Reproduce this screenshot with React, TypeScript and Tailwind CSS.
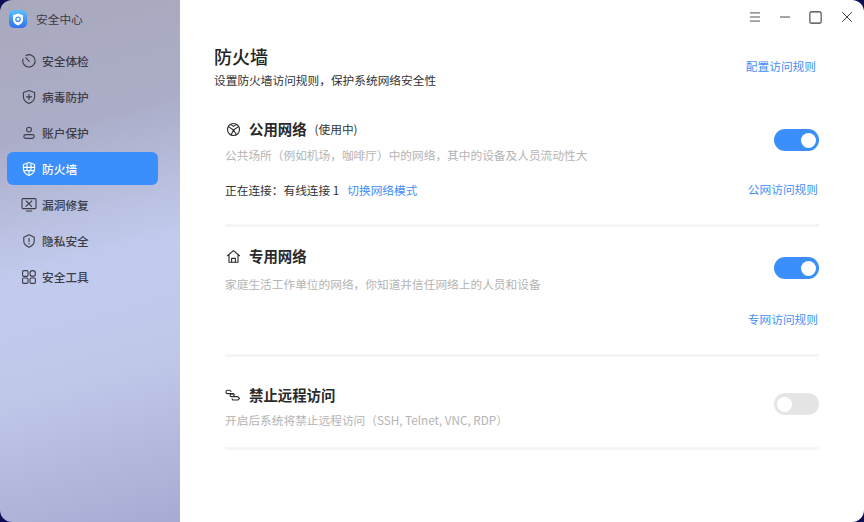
import { FC, ReactNode } from "react";
import { Menu, Minus, Square, X } from "lucide-react";

const CJK = "font-['Noto_Sans_CJK_SC','Noto_Sans',sans-serif]";

/* sidebar icons */
const Ico: FC<{ children: ReactNode; size?: number; className?: string }> = ({ children, size = 16, className }) => (
  <svg width={size} height={size} viewBox="0 0 16 16" fill="none" stroke="currentColor" strokeWidth="1.1" strokeLinecap="round" strokeLinejoin="round" className={className}>
    {children}
  </svg>
);

const ShieldPath = "M8 1.6 13.6 3.4V8c0 3-2.4 5.2-5.6 6.4C4.8 13.2 2.4 11 2.4 8V3.4Z";

const navItems: { label: string; icon: ReactNode; active?: boolean }[] = [
  {
    label: "安全体检",
    icon: (
      <Ico>
        <path d="M5 2.4A6.2 6.2 0 1 1 2 6" />
        <path d="M4.8 4.6 8.2 8.4" />
      </Ico>
    ),
  },
  {
    label: "病毒防护",
    icon: (
      <Ico>
        <path d={ShieldPath} />
        <path d="M8 5.4v5M5.5 7.9h5" />
      </Ico>
    ),
  },
  {
    label: "账户保护",
    icon: (
      <Ico>
        <circle cx="8" cy="4.6" r="2.4" />
        <rect x="2.8" y="9.6" width="10.4" height="3.8" rx="1.9" />
      </Ico>
    ),
  },
  {
    label: "防火墙",
    active: true,
    icon: (
      <Ico>
        <path d={ShieldPath} />
        <path d="M2.6 6.4h10.8M3 9.6h10M6 6.4v3.2M10 6.4v3.2M8 9.6v4.4M6 3v3.4M10 3v3.4" />
      </Ico>
    ),
  },
  {
    label: "漏洞修复",
    icon: (
      <Ico>
        <rect x="1" y="1.6" width="14" height="10" rx="1" />
        <path d="M5.2 4 10.6 9.4M10.8 4 8.6 6.2M5 9.4l2.2-2.2M5.4 14h5.2" />
      </Ico>
    ),
  },
  {
    label: "隐私安全",
    icon: (
      <Ico>
        <path d="M8 1.8 13.2 4.2V8.6C13.2 11 11 13 8 14.2 5 13 2.8 11 2.8 8.6V4.2Z" />
        <path d="M8 5.4v3.4M8 10.6v.3" />
      </Ico>
    ),
  },
  {
    label: "安全工具",
    icon: (
      <Ico>
        <rect x="1.6" y="1.6" width="5.4" height="5.8" rx="1.2" />
        <rect x="9" y="1.6" width="5.4" height="5.8" rx="2.7" />
        <rect x="1.6" y="9" width="5.4" height="5.4" rx="1.2" />
        <rect x="9" y="9" width="5.4" height="5.4" rx="1.2" />
      </Ico>
    ),
  },
];

const Toggle: FC<{ on?: boolean }> = ({ on }) => (
  <div className={`flex h-[22px] w-[45px] items-center rounded-full px-[3px] ${on ? "justify-end bg-[#3a8ffc]" : "justify-start bg-[#e5e5e5]"}`}>
    <div className="h-[15px] w-[15px] rounded-full bg-white" />
  </div>
);

const Divider = () => <div className="h-[3px] w-full bg-[#f5f5f5]" />;

const Link: FC<{ children: ReactNode }> = ({ children }) => (
  <span className="block text-[11.7px] leading-[18px] text-[#3f8ffa]">{children}</span>
);

const Heading: FC<{ children: ReactNode }> = ({ children }) => (
  <span className="ml-[8px] text-[14.4px] font-bold leading-[22px] text-[#2a2a2a]">{children}</span>
);

const Desc: FC<{ children: ReactNode; className?: string }> = ({ children, className }) => (
  <p className={`text-[11.7px] leading-[18px] text-[#b4b4b4] ${className ?? ""}`}>{children}</p>
);

export default function App() {
  return (
    <div className={`${CJK} h-[522px] w-[864px] overflow-hidden bg-[#0d0d55]`}>
      <div className="flex h-full w-full overflow-hidden rounded-[12px]">
        {/* sidebar */}
        <aside className="flex h-full w-[180px] shrink-0 flex-col bg-[linear-gradient(165deg,#a9a9bd_0%,#abadc8_25%,#c2cbee_50%,#c0c8ea_70%,#a7abd2_100%)] px-[7px]">
          <div className="flex h-[37px] items-center gap-[9px] pl-[2px] pt-[1px]">
            <div className="flex h-[18px] w-[18px] items-center justify-center rounded-[5px] bg-gradient-to-b from-[#5cc0fb] to-[#2f6ff0]">
              <svg width="12" height="13" viewBox="0 0 12 13">
                <path d="M6 .6 11 2.2V6.6C11 9.6 8.8 11.4 6 12.4 3.2 11.4 1 9.6 1 6.6V2.2Z" fill="#fff" />
                <circle cx="6" cy="6.2" r="2.2" fill="none" stroke="#2f7df5" strokeWidth="1.2" />
              </svg>
            </div>
            <span className="text-[11.7px] text-[#3a3a44]">安全中心</span>
          </div>
          <nav className="mt-[7px] flex flex-col gap-[3px]">
            {navItems.map((item) => (
              <div
                key={item.label}
                className={`flex h-[33px] w-[151px] items-center gap-[5px] rounded-[6px] pl-[14px] text-[11.7px] font-medium ${
                  item.active ? "bg-[#3a8ffc] text-white" : "text-[#3c3d47]"
                }`}
              >
                {item.icon}
                <span>{item.label}</span>
              </div>
            ))}
          </nav>
        </aside>

        {/* main */}
        <main className="flex h-full flex-1 flex-col bg-white">
          <div className="flex h-[36px] items-center justify-end pb-[2px] pr-[2px] text-[#3c3c3c]">
            <div className="flex w-[31px] justify-center">
              <Menu size={14} strokeWidth={1.5} />
            </div>
            <div className="flex w-[30px] justify-center">
              <Minus size={16} strokeWidth={1.4} />
            </div>
            <div className="flex w-[31px] justify-center">
              <Square size={15} strokeWidth={1.7} />
            </div>
            <div className="flex w-[31px] justify-center">
              <X size={18} strokeWidth={1.3} />
            </div>
          </div>

          <div className="mt-[8px] flex items-start justify-between pl-[34px] pr-[48px]">
            <div>
              <h1 className="text-[18px] font-medium leading-[24px] text-[#222]">防火墙</h1>
              <p className="mt-[3px] text-[11.7px] leading-[18px] text-[#333]">设置防火墙访问规则，保护系统网络安全性</p>
            </div>
            <div className="pt-[13px]">
              <Link>配置访问规则</Link>
            </div>
          </div>

          <div className="mt-[29px] px-[45px]">
            {/* public */}
            <section className="flex h-[106px] items-start justify-between">
              <div>
                <div className="flex items-center">
                  <svg width="15" height="15" viewBox="0 0 15 15" fill="none" stroke="#2b2b2b" strokeWidth="1.1" className="ml-[1px]">
                    <circle cx="7.5" cy="7.5" r="6" />
                    <path d="M2.4 4.6 7.5 8l5-3.4M7.5 8 5 13M7.5 8l3 4.8M4.6 2.4l2.9 2 3-2" />
                  </svg>
                  <Heading>公用网络</Heading>
                  <span className="ml-[8px] text-[11.7px] text-[#333]">(使用中)</span>
                </div>
                <Desc className="mt-[6px]">公共场所（例如机场，咖啡厅）中的网络，其中的设备及人员流动性大</Desc>
                <div className="mt-[17px] text-[11.7px] leading-[18px] text-[#333]">
                  正在连接：有线连接 1<span className="ml-[8px] text-[#3f8ffa]">切换网络模式</span>
                </div>
              </div>
              <div className="flex flex-col items-end pt-[11px]">
                <Toggle on />
                <div className="mr-[1px] mt-[29px]">
                  <Link>公网访问规则</Link>
                </div>
              </div>
            </section>
            <Divider />

            {/* private */}
            <section className="flex h-[127px] items-start justify-between pt-[18px]">
              <div>
                <div className="flex items-center">
                  <svg width="15" height="15" viewBox="0 0 15 15" fill="none" stroke="#2b2b2b" strokeWidth="1.1" strokeLinejoin="round" className="ml-[1px]">
                    <path d="M1.2 7 7.5 1.6 13.8 7M3 5.8V13.2H12V5.8" />
                    <path d="M5.6 13.2V9.4H9.4V13.2" />
                  </svg>
                  <Heading>专用网络</Heading>
                </div>
                <Desc className="mt-[8px]">家庭生活工作单位的网络，你知道并信任网络上的人员和设备</Desc>
              </div>
              <div className="flex flex-col items-end pt-[12px]">
                <Toggle on />
                <div className="mr-[1px] mt-[31px]">
                  <Link>专网访问规则</Link>
                </div>
              </div>
            </section>
            <Divider />

            {/* remote */}
            <section className="flex h-[90px] items-start justify-between pt-[27px]">
              <div>
                <div className="flex items-center">
                  <svg width="16" height="15" viewBox="0 0 16 15" fill="none" stroke="#2b2b2b" strokeWidth="1.1" strokeLinecap="round" strokeLinejoin="round">
                    <path d="M6 3.4 4.6 2.2H2.6a1.7 1.7 0 0 0 0 3.4H8a1.3 1.3 0 0 1 0 2.6" />
                    <path d="M8.4 6H6.4a1.3 1.3 0 0 0 0 2.6h6.4L14.6 10.4 12.8 12H8.4a1.3 1.3 0 0 1-1.3-1.3" />
                  </svg>
                  <Heading>禁止远程访问</Heading>
                </div>
                <Desc className="mt-[5px]">开启后系统将禁止远程访问（SSH, Telnet, VNC, RDP）</Desc>
              </div>
              <div className="pt-[9px]">
                <Toggle />
              </div>
            </section>
            <Divider />
          </div>
        </main>
      </div>
    </div>
  );
}
